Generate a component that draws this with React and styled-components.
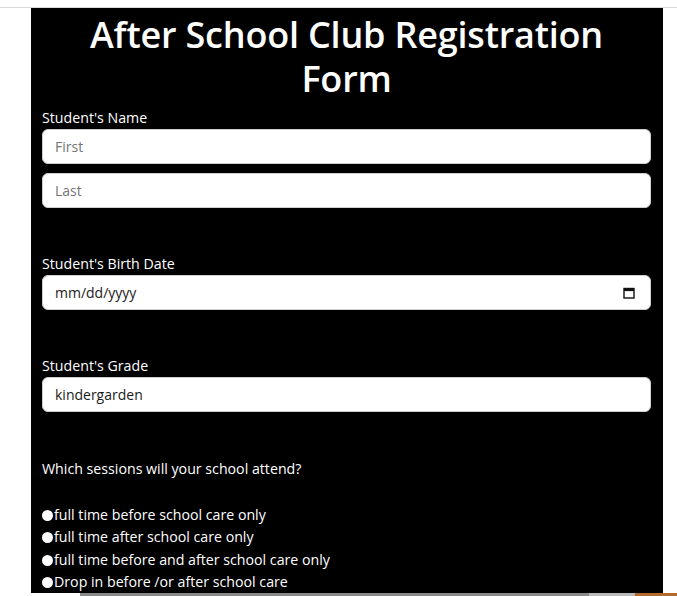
import React from 'react';
import styled, { createGlobalStyle } from 'styled-components';

const GlobalStyle = createGlobalStyle`
  html, body {
    margin: 0;
    padding: 0;
    background: #ffffff;
  }
  * {
    box-sizing: border-box;
  }
`;

const sessions = [
  'full time before school care only',
  'full time after school care only',
  'full time before and after school care only',
  'Drop in before /or after school care',
];

function CalendarIcon() {
  return (
    <svg width="12" height="12" viewBox="0 0 12 12">
      <rect x="1" y="1.5" width="10" height="9.5" fill="none" stroke="#111" strokeWidth="1.4" />
      <rect x="1" y="1.5" width="10" height="2.6" fill="#111" />
    </svg>
  );
}

export default function App() {
  return (
    <>
      <GlobalStyle />
      <Screen>
        <Main>
          <Panel>
            <Title>After School Club Registration Form</Title>

            <Field>
              <Label>Student's Name</Label>
              <Input placeholder="First" />
              <Input placeholder="Last" />
            </Field>

            <Field>
              <Label>Student's Birth Date</Label>
              <Box>
                <BoxText>mm/dd/yyyy</BoxText>
                <CalendarIcon />
              </Box>
            </Field>

            <Field>
              <Label>Student's Grade</Label>
              <Box>
                <BoxText>kindergarden</BoxText>
              </Box>
            </Field>

            <Question>Which sessions will your school attend?</Question>

            <Options>
              {sessions.map((s) => (
                <Option key={s}>
                  <Dot />
                  {s}
                </Option>
              ))}
            </Options>
          </Panel>
        </Main>
        <BottomBar>
          <BarSegment $color="#8a8a8a" $grow={1} />
          <BarSegment $color="#b9b9b9" $width="46px" />
          <BarSegment $color="#b36a2c" $width="42px" />
        </BottomBar>
      </Screen>
    </>
  );
}

const Screen = styled.div`
  height: 596px;
  display: flex;
  flex-direction: column;
  overflow: hidden;
  border-top: 7px solid #ffffff;
`;

const Main = styled.div`
  flex: 1;
  overflow: hidden;
  border-top: 1px solid #d8d8d8;
  padding-left: 31px;
`;

const Panel = styled.div`
  width: 632px;
  min-height: 100%;
  background: #000000;
  color: #ffffff;
  font-family: "Open Sans", "Noto Sans", sans-serif;
  padding: 5px 12px 0 11px;
  display: flex;
  flex-direction: column;
`;

const Title = styled.h1`
  margin: 0 0 7px;
  padding: 0 40px;
  text-align: center;
  font-size: 36px;
  font-weight: 600;
  line-height: 44px;
  letter-spacing: -0.2px;
`;

const Field = styled.div`
  display: flex;
  flex-direction: column;
  gap: 9px;
  margin-bottom: 46px;
`;

const Label = styled.div`
  font-size: 14.2px;
  line-height: 20px;
  margin-bottom: -8px;
`;

const Input = styled.input`
  height: 35px;
  width: 100%;
  border: 1px solid #cfcfcf;
  border-radius: 6px;
  background: #ffffff;
  padding: 0 12px;
  font-family: inherit;
  font-size: 14px;
  color: #222;
  outline: none;

  &::placeholder {
    color: #757575;
  }
`;

const Box = styled.div`
  height: 35px;
  border: 1px solid #cfcfcf;
  border-radius: 6px;
  background: #ffffff;
  padding: 0 15px 0 12px;
  display: flex;
  align-items: center;
  justify-content: space-between;
`;

const BoxText = styled.span`
  font-size: 14px;
  color: #1a1a1a;
`;

const Question = styled.div`
  font-size: 14.2px;
  line-height: 20px;
  margin-top: 1px;
  margin-bottom: 25px;
`;

const Options = styled.div`
  display: flex;
  flex-direction: column;
`;

const Option = styled.div`
  display: flex;
  align-items: center;
  font-size: 14.2px;
  line-height: 22.4px;
`;

const Dot = styled.span`
  width: 11px;
  height: 11px;
  border-radius: 50%;
  background: #ffffff;
  margin-right: 1px;
  flex-shrink: 0;
`;

const BottomBar = styled.div`
  height: 3px;
  display: flex;
  padding-left: 80px;
  background: #ffffff;
`;

const BarSegment = styled.div`
  background: ${(p) => p.$color};
  flex: ${(p) => (p.$grow ? p.$grow : '0 0 auto')};
  width: ${(p) => p.$width || 'auto'};
`;
